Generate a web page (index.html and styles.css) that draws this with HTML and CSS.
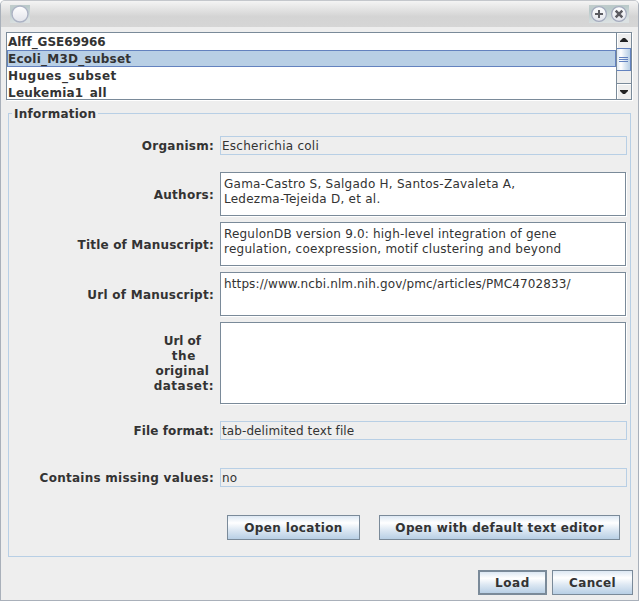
FILE: index.html
```html
<!DOCTYPE html>
<html lang="en">
<head>
<meta charset="utf-8">
<title>Load dataset</title>
<link rel="stylesheet" href="styles.css">
</head>
<body>
<main class="window">
  <header class="titlebar">
    <svg class="menu-orb" width="20" height="18" viewBox="0 0 20 18">
      <defs>
        <linearGradient id="orb" x1="0" y1="0" x2="0" y2="1"><stop offset="0" stop-color="#fff"/><stop offset="1" stop-color="#e1e3ea"/></linearGradient>
        <linearGradient id="halo" x1="0" y1="0" x2=".3" y2="1"><stop offset="0" stop-color="#c3cecd"/><stop offset=".3" stop-color="#b9c9c9"/><stop offset="1" stop-color="#dbe1e2"/></linearGradient>
      </defs>
      <rect width="20" height="18" fill="url(#halo)"/>
      <circle cx="10" cy="9" r="8" fill="url(#orb)" stroke="#acb3c4" stroke-width="1.4"/>
    </svg>
    <svg class="window-controls" width="40" height="18" viewBox="0 0 40 18">
      <rect width="40" height="18" fill="url(#halo)"/>
      <circle cx="10" cy="9" r="7.4" fill="url(#orb)" stroke="#a3aabd" stroke-width="1.2"/>
      <path d="M6 9h8M10 5v8" stroke="#5c5c62" stroke-width="2"/>
      <circle cx="30" cy="9" r="7.4" fill="url(#orb)" stroke="#a3aabd" stroke-width="1.2"/>
      <path d="M26.7 5.7l6.6 6.6M33.3 5.7l-6.6 6.6" stroke="#5c5c62" stroke-width="2.5"/>
    </svg>
  </header>
  <section class="list-pane">
    <ul class="datasets">
      <li class="snug">Alff_GSE69966</li>
      <li class="selected">Ecoli_M3D_subset</li>
      <li class="wide">Hugues_subset</li>
      <li>Leukemia1_all</li>
    </ul>
    <div class="scrollbar">
      <div class="arrow up"><svg width="8" height="4" viewBox="0 0 8 4"><path d="M0 4V3L3 0h2l3 3v1z" fill="#222"/></svg></div>
      <div class="thumb"><i></i><i></i><i></i></div>
      <div class="track"></div>
      <div class="arrow down"><svg width="8" height="4" viewBox="0 0 8 4"><path d="M0 0v1l3 3h2l3-3V0z" fill="#222"/></svg></div>
    </div>
  </section>
  <section class="group">
    <h2 class="legend"><span>Information</span></h2>
    <div class="form">
      <label class="first">Organism:</label><div class="field first">Escherichia coli</div>
      <label>Authors:</label><div class="area">Gama-Castro S, Salgado H, Santos-Zavaleta A,<br>Ledezma-Tejeida D, et al.</div>
      <label class="title-line">Title of Manuscript:</label><div class="area"><span class="title-line">RegulonDB version 9.0: high-level integration of gene</span><br>regulation, coexpression, motif clustering and beyond</div>
      <label>Url of Manuscript:</label><div class="area url">https://www.ncbi.nlm.nih.gov/pmc/articles/PMC4702833/</div>
      <label class="multi"><span class="snug hang">Url of</span><br><span class="wide">the</span><br><span class="hang">original</span><br><span class="wide">dataset:</span></label><div class="area"></div>
      <label class="last format">File format:</label><div class="field last format">tab-delimited text file</div>
      <label class="last">Contains missing values:</label><div class="field last">no</div>
    </div>
    <div class="actions">
      <button class="open-location">Open location</button>
      <button class="open-editor">Open with default text editor</button>
    </div>
  </section>
  <footer class="footer">
    <button class="load">Load</button>
    <button class="cancel">Cancel</button>
  </footer>
</main>
</body>
</html>
```
FILE: styles.css
```css
* { box-sizing: border-box; }
html { background: #fff; }
body {
  margin: 0;
  font: 12px/15px "DejaVu Sans", sans-serif;
  letter-spacing: 0.25px;
  color: #333;
}
.window {
  width: 639px;
  height: 601px;
  display: flex;
  flex-direction: column;
  background: #eee;
  border: 1px solid #a9b0ba;
  border-top-color: #c4c7cc;
  border-radius: 5px 5px 0 0;
  overflow: hidden;
}
.titlebar {
  height: 26px;
  flex: none;
  display: flex;
  justify-content: space-between;
  padding: 4px 9px 0 9px;
  background: linear-gradient(#f4f4f4, #d4d4d4 60%, #d6d6d6);
}
.list-pane {
  display: flex;
  flex: none;
  width: 626px;
  height: 68px;
  margin: 5px 0 0 5px;
  border: 1px solid #7a8a99;
  box-shadow: 1px 1px #fff;
  background: #fff;
}
.datasets {
  flex: 1;
  height: 66px;
  margin: 0;
  padding: 0;
  list-style: none;
  overflow: hidden;
  font-weight: bold;
}
.datasets li { height: 17px; padding: 2px 1px 0; white-space: nowrap; border: 0 solid #6382bf; }
.datasets .selected { background: #b8cfe5; border-width: 1px; padding: 1px 0 0; }
.snug { letter-spacing: -0.05px; }
.wide { letter-spacing: 0.5px; }
.hang { padding-right: 3px; }
.scrollbar {
  width: 15px;
  display: flex;
  flex-direction: column;
  background: #eee;
  border-left: 1px solid #7a8a99;
}
.arrow { height: 15px; display: flex; align-items: center; justify-content: center; box-shadow: inset 1px 1px #fff; }
.arrow.up { padding-bottom: 1px; }
.arrow.down { padding-top: 1px; }
.thumb {
  height: 23px;
  border: 1px solid #6382bf;
  border-left: 0;
  background: linear-gradient(90deg, #dde8f3, #fff 30%, #dde8f3 60%, #b8cfe5);
  display: flex;
  flex-direction: column;
  align-items: center;
  justify-content: center;
  gap: 1px;
}
.thumb i { width: 9px; height: 1px; background: #6382bf; }
.track { flex: 1; border-bottom: 1px solid #7a8a99; }
.group {
  flex: none;
  width: 623px;
  height: 444px;
  margin: 13px 0 0 7px;
  border: 1px solid #b8cfe5;
}
.legend { height: 15px; margin: -7px 0 0 3px; font-size: 12px; line-height: 15px; }
.legend span { display: inline-block; padding: 0 2px; background: #eee; }
.form {
  display: grid;
  grid-template-columns: 206px 407px;
  grid-template-rows: 30px 44px 44px 44px 82px 30px 41px;
  gap: 6px 5px;
  margin-top: 14px;
  align-items: center;
}
label { justify-self: end; padding: 2px 1px 0 0; font-weight: bold; white-space: nowrap; }
label.first { margin-top: 1px; }
label.last { margin-bottom: 1px; }
.form .first { align-self: start; }
.form .last { align-self: end; }
.format { letter-spacing: 0.1px; }
.multi { text-align: center; }
.field { height: 19px; border: 1px solid #b8cfe5; padding: 2px 1px 0; white-space: nowrap; }
.area {
  width: 406px;
  height: 100%;
  border: 1px solid #7a8a99;
  box-shadow: 1px 1px #fff;
  padding: 4px 3px 0;
  background: #fff;
  white-space: nowrap;
}
.title-line { letter-spacing: 0.19px; }
.url { letter-spacing: 0.12px; }
.actions { display: flex; gap: 19px; margin: 28px 0 0 218px; }
button {
  height: 25px;
  padding: 1px 0 0;
  border: 1px solid #7a8a99;
  background: linear-gradient(#dde8f3, #fff 30%, #dde8f3 60%, #b8cfe5);
  font: bold 12px/15px "DejaVu Sans", sans-serif;
  letter-spacing: 0.35px;
  color: #333;
}
.open-location { width: 133px; }
.open-editor { width: 241px; }
.footer { display: flex; justify-content: flex-end; gap: 5px; margin: 13px 5px 0 0; }
.load { width: 69px; border-width: 2px; letter-spacing: 0.6px; }
.cancel { width: 81px; }
```
